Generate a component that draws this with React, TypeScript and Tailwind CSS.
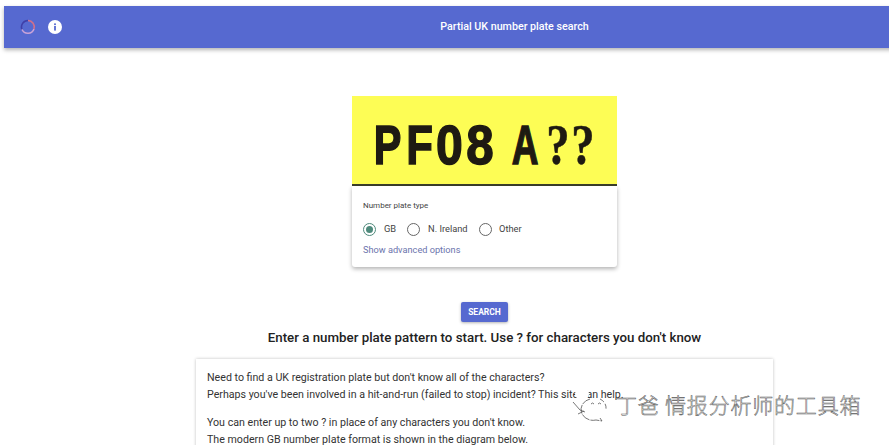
const radioRing = "h-[13px] w-[13px] rounded-full border-[1.5px] border-[#666]"

export default function App() {
  return (
    <div className="relative h-[445px] w-[889px] overflow-hidden bg-white font-['Roboto',sans-serif] text-[#222]">
      <div className="mt-1.5 ml-1 w-[961px]">
        <header className="flex h-[42px] items-center bg-[#5669d0] pl-[16px] text-white shadow-[0_2px_4px_rgba(0,0,0,0.3)]">
          <div className="flex w-[44px] items-center gap-[12px]">
            <svg width="16" height="16" viewBox="0 0 16 16" fill="none" className="shrink-0">
              <path d="M8 1.5A6.5 6.5 0 0 0 2 10.5" stroke="#3f3fa8" strokeWidth="1.6" />
              <path d="M2 10.5A6.5 6.5 0 0 0 14 10" stroke="#c9a3d8" strokeWidth="1.6" />
              <path d="M14 10A6.5 6.5 0 0 0 8 1.5" stroke="#d0708a" strokeWidth="1.6" />
            </svg>
            <svg width="14" height="14" viewBox="0 0 14 14" className="shrink-0">
              <circle cx="7" cy="7" r="7" fill="#fff" />
              <rect x="6.1" y="6" width="1.8" height="4.6" fill="#5669d0" />
              <rect x="6.1" y="3.4" width="1.8" height="1.7" fill="#5669d0" />
            </svg>
          </div>
          <h1 className="flex-1 text-center text-[10.7px] font-medium">Partial UK number plate search</h1>
        </header>

        <main className="flex flex-col items-center pt-[48px]">
          <div className="w-[265px]">
            <div className="flex h-[90px] items-center justify-center border-b-2 border-[#3b3f2a] bg-[#fdfd55] pt-[9px] pl-[1px] font-['Liberation_Sans',sans-serif] text-[56px] leading-none font-bold text-[#1e1a12] [-webkit-text-stroke:1.5px_#1e1a12]">
              <span className="flex w-[25px] scale-x-[0.74] justify-center">P</span>
              <span className="ml-[7px] flex w-[25px] scale-x-[0.78] justify-center">F</span>
              <span className="ml-[5px] flex w-[25px] scale-x-[0.86] justify-center">0</span>
              <span className="ml-[5px] flex w-[26px] scale-x-[0.88] justify-center">8</span>
              <span className="ml-[20px] flex w-[24px] scale-x-[0.66] justify-center">A</span>
              <span className="ml-[9px] flex w-[24px] scale-x-[0.82] justify-center font-['Liberation_Serif',serif] text-[57px] [-webkit-text-stroke:0.5px_#1e1a12]">?</span>
              <span className="ml-[1px] flex w-[24px] scale-x-[0.82] justify-center font-['Liberation_Serif',serif] text-[57px] [-webkit-text-stroke:0.5px_#1e1a12]">?</span>
            </div>
            <section className="h-[81px] rounded-b-[3px] bg-white pt-[14px] pl-[11px] shadow-[0_2px_4px_rgba(0,0,0,0.3)]">
              <p className="text-[8px] leading-[12px] font-normal text-[#444]">Number plate type</p>
              <div className="mt-[10px] flex h-[14px] items-center text-[9.3px] text-[#444]">
                <span className="flex h-[13px] w-[13px] items-center justify-center rounded-full border-[1.5px] border-[#4f8a7c]">
                  <span className="h-[7px] w-[7px] rounded-full bg-[#4f8a7c]" />
                </span>
                <span className="ml-[8px] w-[13px]">GB</span>
                <span className={`ml-[10px] ${radioRing}`} />
                <span className="ml-[8px] w-[40px]">N. Ireland</span>
                <span className={`ml-[11px] ${radioRing}`} />
                <span className="ml-[7px]">Other</span>
              </div>
              <p className="mt-[7px] text-[9.2px] leading-[13px] text-[#6c74ad]">Show advanced options</p>
            </section>
          </div>

          <button className="mt-[35px] h-[20px] w-[47px] rounded-[2px] bg-[#5669d0] text-[8.5px] font-bold text-white shadow-[0_1px_3px_rgba(0,0,0,0.3)]">
            SEARCH
          </button>

          <h2 className="mt-[7px] text-[13.3px] leading-[18px] font-medium">
            Enter a number plate pattern to start. Use ? for characters you don't know
          </h2>

          <section className="mt-[12px] w-[577px] bg-white px-[11px] pt-[10px] pb-[40px] text-[10.65px] leading-[17px] text-[#333] shadow-[0_0_3px_rgba(0,0,0,0.25)]">
            <p>Need to find a UK registration plate but don't know all of the characters?</p>
            <p>Perhaps you've been involved in a hit-and-run (failed to stop) incident? This site can help.</p>
            <p className="mt-[11px]">You can enter up to two ? in place of any characters you don't know.</p>
            <p>The modern GB number plate format is shown in the diagram below.</p>
          </section>
        </main>
      </div>

      {/* wechat watermark */}
      <div className="absolute top-[390px] left-[570px] flex items-center">
        <svg width="38" height="32" viewBox="0 0 38 32" fill="none" stroke="#555" strokeWidth="0.8">
          <ellipse cx="12" cy="4" rx="7" ry="6" fill="#fff" stroke="none" />
          <path d="M20 9a11 10 0 1 0 6 21l6 1-2-3" strokeDasharray="9 1" />
          <path d="M30 9a11 10 0 0 1 6 10" strokeDasharray="5 2" />
          <path d="M3 12l7 8 5 2M8 24l6-3" />
          <path d="M21 14l1.5-1 1.5 1M28 14l1.5-1 1.5 1" />
        </svg>
        <span className="ml-[8px] -translate-y-[2px] font-['Noto_Sans_CJK_SC',sans-serif] text-[21px] leading-[30px] font-light tracking-[0.8px] whitespace-nowrap text-white [-webkit-text-stroke:0.5px_#555]">
          丁爸 情报分析师的工具箱
        </span>
      </div>
    </div>
  )
}
